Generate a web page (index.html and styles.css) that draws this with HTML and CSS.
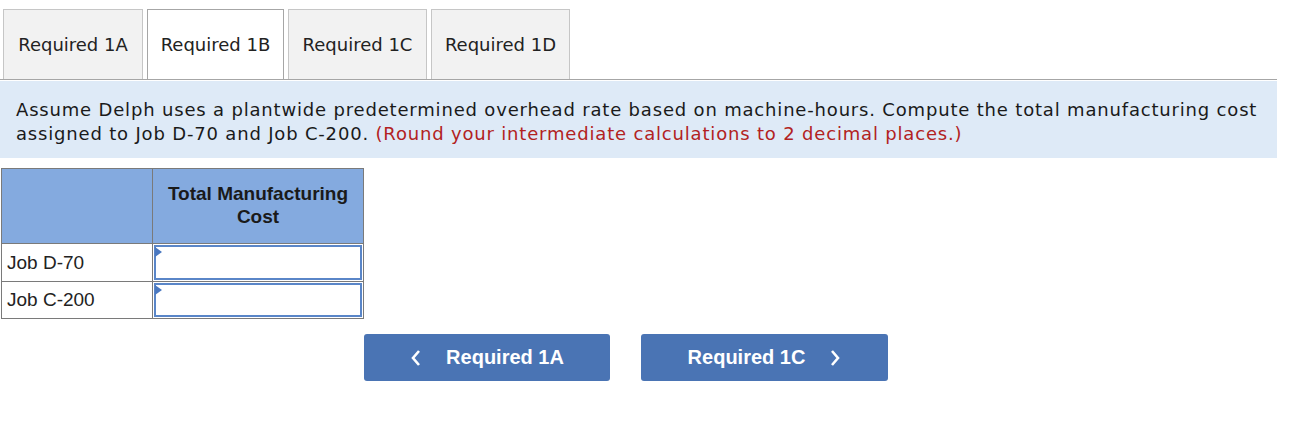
FILE: index.html
```html
<!DOCTYPE html>
<html>
<head>
<meta charset="utf-8">
<link rel="stylesheet" href="styles.css">
</head>
<body>
<div class="tabs">
  <div class="tab">Required 1A</div>
  <div class="tab active">Required 1B</div>
  <div class="tab">Required 1C</div>
  <div class="tab">Required 1D</div>
</div>
<div class="panel">
  Assume Delph uses a plantwide predetermined overhead rate based on machine-hours. Compute the total manufacturing cost<br>assigned to Job D-70 and Job C-200. <span class="hint">(Round your intermediate calculations to 2 decimal places.)</span>
</div>
<table class="grid">
  <tr class="head">
    <th class="c1"></th>
    <th class="c2">Total Manufacturing Cost</th>
  </tr>
  <tr class="row first">
    <td class="label">Job D-70</td>
    <td class="cell"><div class="input"><span class="flag"></span></div></td>
  </tr>
  <tr class="row">
    <td class="label">Job C-200</td>
    <td class="cell"><div class="input"><span class="flag"></span></div></td>
  </tr>
</table>
<div class="nav">
  <button class="btn prev"><svg width="12" height="18" viewBox="0 0 12 18"><path d="M9 2 L3 9 L9 16" fill="none" stroke="#fff" stroke-width="2.6"/></svg><span>Required 1A</span></button>
  <button class="btn next"><span>Required 1C</span><svg width="12" height="18" viewBox="0 0 12 18"><path d="M3 2 L9 9 L3 16" fill="none" stroke="#fff" stroke-width="2.6"/></svg></button>
</div>
</body>
</html>
```

FILE: styles.css
```css
body {
  margin: 0;
  background: #fff;
  font-family: "DejaVu Sans", Verdana, sans-serif;
  color: #1a1a1a;
}
.tabs {
  display: flex;
  gap: 4px;
  padding: 9px 0 0 3px;
  width: 1274px;
  border-bottom: 1px solid #a6a6a6;
}
.tab {
  box-sizing: border-box;
  width: 139px;
  height: 70px;
  border: 1px solid #c6c6c6;
  border-bottom: none;
  background: #f2f2f2;
  display: flex;
  align-items: center;
  justify-content: center;
  font-size: 18px;
  color: #222;
}
.tab:first-child { width: 140px; }
.tab.active {
  background: #fff;
  border-color: #a6a6a6;
  width: 137px;
}
.panel {
  margin-top: 1px;
  width: 1277px;
  box-sizing: border-box;
  background: #deeaf7;
  padding: 17px 16px 12px;
  font-size: 18px;
  letter-spacing: 0.82px;
  line-height: 24px;
  color: #1a1a1a;
  white-space: nowrap;
}
.hint {
  color: #b22222;
}
.grid {
  margin: 10px 0 0 1px;
  border-collapse: collapse;
  font-family: "Liberation Sans", Arial, sans-serif;
  font-size: 19px;
}
.grid th, .grid td {
  border: 1px solid #7a7a7a;
  padding: 0;
}
.head th {
  background: #84aadf;
  height: 75px;
  font-weight: bold;
  color: #1a1a1a;
  line-height: 23px;
  vertical-align: top;
  padding-top: 13px;
  box-sizing: border-box;
}
.c1 { width: 151px; }
.c2 { width: 211px; }
.label {
  height: 36px;
  padding-left: 5px !important;
  color: #222;
  vertical-align: middle;
}
.row.first .label { height: 37px; }
.cell {
  padding: 1px !important;
}
.input {
  position: relative;
  box-sizing: border-box;
  height: 34px;
  border: 2px solid #5a86c8;
  background: #fff;
}
.row.first .input { height: 35px; }
.flag {
  position: absolute;
  left: -1px;
  top: 0;
  width: 0;
  height: 0;
  border-top: 5px solid transparent;
  border-bottom: 5px solid transparent;
  border-left: 7px solid #4a78c0;
}
.nav {
  display: flex;
  gap: 31px;
  margin: 15px 0 0 364px;
}
.btn {
  box-sizing: border-box;
  width: 247px;
  height: 47px;
  border: none;
  border-radius: 3px;
  background: #4a74b4;
  color: #fff;
  font-family: "Liberation Sans", Arial, sans-serif;
  font-weight: bold;
  font-size: 20px;
  display: flex;
  align-items: center;
  justify-content: center;
  gap: 24px;
  padding: 0;
}
.btn.prev { width: 246px; }
```
